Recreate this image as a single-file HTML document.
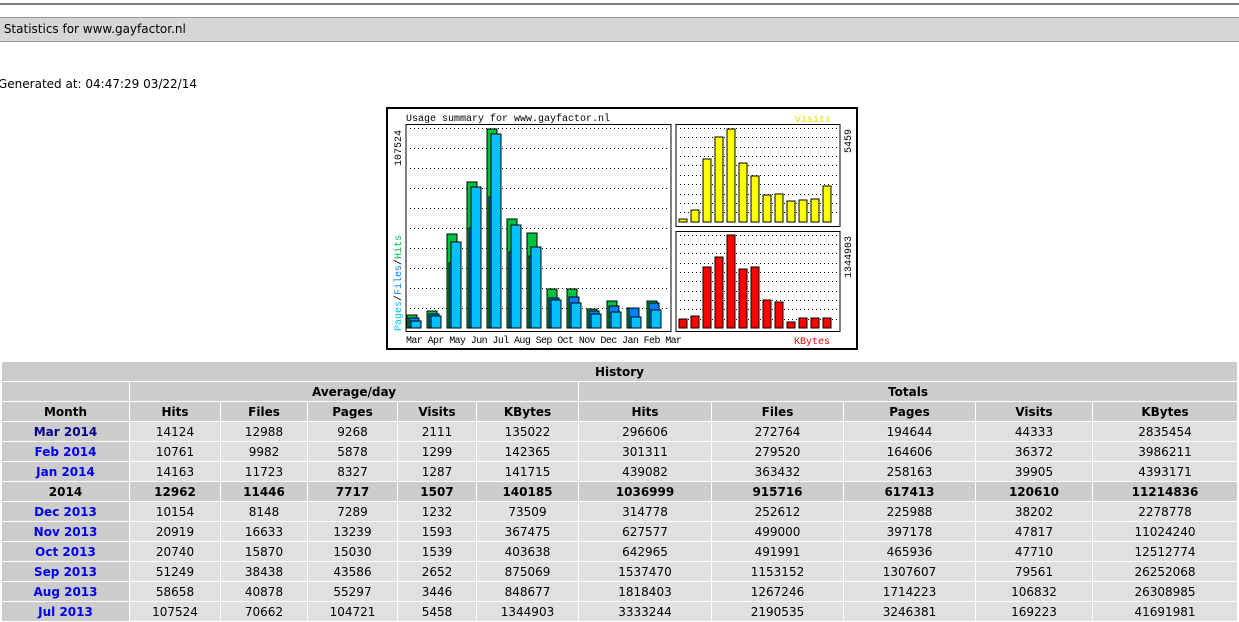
<!DOCTYPE html>
<html><head><meta charset="utf-8"><style>
body{margin:0;width:1239px;height:615px;overflow:hidden;background:#fff;font-family:"DejaVu Sans","Liberation Sans",sans-serif;position:relative}
.hr{position:absolute;left:0;top:3px;width:1239px;height:0;border-top:2px solid #808080}
.bar{position:absolute;left:0;top:17px;width:1239px;height:23px;background:#d6d6d6;border-top:1px solid #999;border-bottom:1px solid #999;font-size:12px;line-height:23px;color:#000}
.gen{position:absolute;left:-2px;top:77px;font-size:12px;color:#000}
table{position:absolute;left:1px;top:361px;border-collapse:collapse;font-size:12px;table-layout:fixed;width:1237px}
td,th{border:1px solid #fff;height:19px;padding:0;text-align:center;color:#000}
th{background:#ccc;font-weight:bold}
td{background:#e0e0e0}
td.m{background:#ccc;font-weight:bold}
td.m a{color:#00008b}
tr.y td{background:#ccc;font-weight:bold}
</style></head><body>
<div class="hr"></div>
<div class="bar">&nbsp;Statistics for www.gayfactor.nl</div>
<div class="gen">Generated at: 04:47:29 03/22/14</div>
<svg style="position:absolute;left:0;top:0" width="1239" height="360" font-family="'Liberation Mono',monospace" font-size="10">
<rect x="387" y="108" width="470" height="241" fill="#fff" stroke="#000" stroke-width="2"/>
<rect x="406" y="124.5" width="265" height="207" fill="#fff" stroke="#000"/>
<rect x="676" y="124.5" width="164" height="102" fill="#fff" stroke="#000"/>
<rect x="676" y="231.5" width="164" height="100" fill="#fff" stroke="#000"/>
<g stroke="#000" stroke-dasharray="1,3">
<path d="M410 128.5H668M410 148.5H668M410 168.5H668M410 188.5H668M410 208.5H668M410 228.5H668M410 248.5H668M410 268.5H668M410 288.5H668M410 308.5H668"/>
<path d="M680 128.5H837M680 137.5H837M680 147.5H837M680 156.5H837M680 165.5H837M680 175.5H837M680 184.5H837M680 194.5H837M680 203.5H837M680 212.5H837"/>
<path d="M680 235.5H837M680 244.5H837M680 253.5H837M680 263.5H837M680 272.5H837M680 281.5H837M680 291.5H837M680 300.5H837M680 309.5H837M680 319.5H837"/>
</g>
<g stroke="#000" stroke-width="1">
<g fill="#00c040">
<rect x="407" y="315" width="10" height="13"/><rect x="427" y="311" width="10" height="17"/><rect x="447" y="234" width="10" height="94"/><rect x="467" y="182" width="10" height="146"/><rect x="487" y="129" width="10" height="199"/><rect x="507" y="219" width="10" height="109"/><rect x="527" y="233" width="10" height="95"/><rect x="547" y="289" width="10" height="39"/><rect x="567" y="289" width="10" height="39"/><rect x="587" y="309" width="10" height="19"/><rect x="607" y="301" width="10" height="27"/><rect x="627" y="308" width="10" height="20"/><rect x="647" y="301" width="10" height="27"/>
</g>
<g fill="#0080ff">
<rect x="409" y="318" width="10" height="10"/><rect x="429" y="314" width="10" height="14"/><rect x="449" y="263" width="10" height="65"/><rect x="469" y="228" width="10" height="100"/><rect x="489" y="197" width="10" height="131"/><rect x="509" y="252" width="10" height="76"/><rect x="529" y="256" width="10" height="72"/><rect x="549" y="298" width="10" height="30"/><rect x="569" y="297" width="10" height="31"/><rect x="589" y="311" width="10" height="17"/><rect x="609" y="306" width="10" height="22"/><rect x="629" y="308" width="10" height="20"/><rect x="649" y="303" width="10" height="25"/>
</g>
<g fill="#00c0ff">
<rect x="411" y="321" width="10" height="7"/><rect x="431" y="316" width="10" height="12"/><rect x="451" y="242" width="10" height="86"/><rect x="471" y="187" width="10" height="141"/><rect x="491" y="134" width="10" height="194"/><rect x="511" y="225" width="10" height="103"/><rect x="531" y="247" width="10" height="81"/><rect x="551" y="300" width="10" height="28"/><rect x="571" y="303" width="10" height="25"/><rect x="591" y="314" width="10" height="14"/><rect x="611" y="312" width="10" height="16"/><rect x="631" y="317" width="10" height="11"/><rect x="651" y="310" width="10" height="18"/>
</g>
<g fill="#ffff00">
<rect x="679" y="219" width="8" height="3"/><rect x="691" y="210" width="8" height="12"/><rect x="703" y="159" width="8" height="63"/><rect x="715" y="137" width="8" height="85"/><rect x="727" y="129" width="8" height="93"/><rect x="739" y="163" width="8" height="59"/><rect x="751" y="176" width="8" height="46"/><rect x="763" y="195" width="8" height="27"/><rect x="775" y="194" width="8" height="28"/><rect x="787" y="201" width="8" height="21"/><rect x="799" y="200" width="8" height="22"/><rect x="811" y="199" width="8" height="23"/><rect x="823" y="186" width="8" height="36"/>
</g>
<g fill="#ff0000">
<rect x="679" y="319" width="8" height="9"/><rect x="691" y="316" width="8" height="12"/><rect x="703" y="267" width="8" height="61"/><rect x="715" y="257" width="8" height="71"/><rect x="727" y="235" width="8" height="93"/><rect x="739" y="269" width="8" height="59"/><rect x="751" y="267" width="8" height="61"/><rect x="763" y="300" width="8" height="28"/><rect x="775" y="302" width="8" height="26"/><rect x="787" y="322" width="8" height="6"/><rect x="799" y="318" width="8" height="10"/><rect x="811" y="318" width="8" height="10"/><rect x="823" y="318" width="8" height="10"/>
</g>
</g>
<text x="406" y="121">Usage summary for www.gayfactor.nl</text>
<text x="795" y="122" fill="#e0e000">Visits</text>
<text x="794" y="344" fill="#ff0000">KBytes</text>
<text x="406" y="343" letter-spacing="-0.6">Mar Apr May Jun Jul Aug Sep Oct Nov Dec Jan Feb Mar</text>
<text transform="translate(401,166) rotate(-90)">107524</text>
<text transform="translate(401,331) rotate(-90)"><tspan fill="#00c0ff">Pages</tspan>/<tspan fill="#0080ff">Files</tspan>/<tspan fill="#00c040">Hits</tspan></text>
<text transform="translate(851,153) rotate(-90)">5459</text>
<text transform="translate(851,278) rotate(-90)">1344903</text>
</svg>
<table>
<colgroup><col style="width:128px"><col style="width:91px"><col style="width:87px"><col style="width:90px"><col style="width:79px"><col style="width:102px"><col style="width:133px"><col style="width:132px"><col style="width:132px"><col style="width:117px"><col style="width:145px"></colgroup>
<tr><th colspan="11">History</th></tr>
<tr><th></th><th colspan="5">Average/day</th><th colspan="5">Totals</th></tr>
<tr><th>Month</th><th>Hits</th><th>Files</th><th>Pages</th><th>Visits</th><th>KBytes</th><th>Hits</th><th>Files</th><th>Pages</th><th>Visits</th><th>KBytes</th></tr>
<tr><td class="m"><a>Mar 2014</a></td><td>14124</td><td>12988</td><td>9268</td><td>2111</td><td>135022</td><td>296606</td><td>272764</td><td>194644</td><td>44333</td><td>2835454</td></tr>
<tr><td class="m"><a style="color:#0000ee">Feb 2014</a></td><td>10761</td><td>9982</td><td>5878</td><td>1299</td><td>142365</td><td>301311</td><td>279520</td><td>164606</td><td>36372</td><td>3986211</td></tr>
<tr><td class="m"><a style="color:#0000ee">Jan 2014</a></td><td>14163</td><td>11723</td><td>8327</td><td>1287</td><td>141715</td><td>439082</td><td>363432</td><td>258163</td><td>39905</td><td>4393171</td></tr>
<tr class="y"><td>2014</td><td>12962</td><td>11446</td><td>7717</td><td>1507</td><td>140185</td><td>1036999</td><td>915716</td><td>617413</td><td>120610</td><td>11214836</td></tr>
<tr><td class="m"><a style="color:#0000ee">Dec 2013</a></td><td>10154</td><td>8148</td><td>7289</td><td>1232</td><td>73509</td><td>314778</td><td>252612</td><td>225988</td><td>38202</td><td>2278778</td></tr>
<tr><td class="m"><a style="color:#0000ee">Nov 2013</a></td><td>20919</td><td>16633</td><td>13239</td><td>1593</td><td>367475</td><td>627577</td><td>499000</td><td>397178</td><td>47817</td><td>11024240</td></tr>
<tr><td class="m"><a style="color:#0000ee">Oct 2013</a></td><td>20740</td><td>15870</td><td>15030</td><td>1539</td><td>403638</td><td>642965</td><td>491991</td><td>465936</td><td>47710</td><td>12512774</td></tr>
<tr><td class="m"><a style="color:#0000ee">Sep 2013</a></td><td>51249</td><td>38438</td><td>43586</td><td>2652</td><td>875069</td><td>1537470</td><td>1153152</td><td>1307607</td><td>79561</td><td>26252068</td></tr>
<tr><td class="m"><a style="color:#0000ee">Aug 2013</a></td><td>58658</td><td>40878</td><td>55297</td><td>3446</td><td>848677</td><td>1818403</td><td>1267246</td><td>1714223</td><td>106832</td><td>26308985</td></tr>
<tr><td class="m"><a style="color:#0000ee">Jul 2013</a></td><td>107524</td><td>70662</td><td>104721</td><td>5458</td><td>1344903</td><td>3333244</td><td>2190535</td><td>3246381</td><td>169223</td><td>41691981</td></tr>
</table>
</body></html>
